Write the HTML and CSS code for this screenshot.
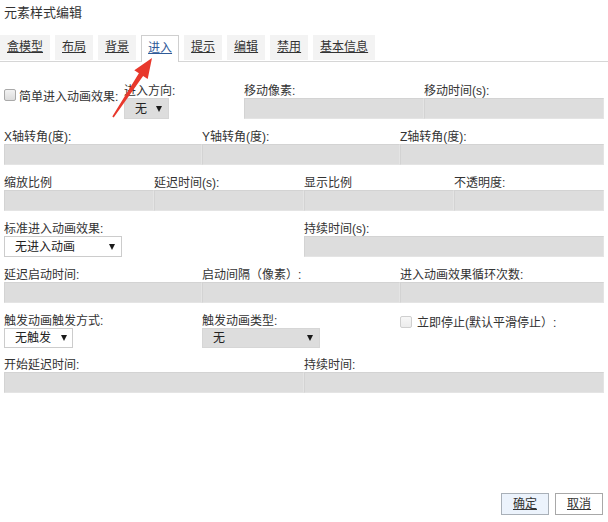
FILE: index.html
```html
<!DOCTYPE html>
<html lang="zh-CN">
<head>
<meta charset="utf-8">
<title>元素样式编辑</title>
<link rel="stylesheet" href="styles.css">
</head>
<body>
<div class="dialog">
  <div class="title">元素样式编辑</div>
  <div class="tabs">
    <a class="tab">盒模型</a>
    <a class="tab">布局</a>
    <a class="tab">背景</a>
    <a class="tab active">进入</a>
    <a class="tab">提示</a>
    <a class="tab">编辑</a>
    <a class="tab">禁用</a>
    <a class="tab">基本信息</a>
  </div>
  <div class="form">
    <div class="row row-a">
      <div class="check-field first"><span class="checkbox"></span><span class="check-label">简单进入动画效果:</span></div>
      <div class="field"><div class="label">进入方向:</div><div class="select gray dir"><span>无</span><span class="caret"></span></div></div>
      <div class="field"><div class="label">移动像素:</div><div class="input"></div></div>
      <div class="field"><div class="label">移动时间(s):</div><div class="input"></div></div>
    </div>
    <div class="row row-three">
      <div class="field"><div class="label">X轴转角(度):</div><div class="input"></div></div>
      <div class="field"><div class="label">Y轴转角(度):</div><div class="input"></div></div>
      <div class="field"><div class="label">Z轴转角(度):</div><div class="input"></div></div>
    </div>
    <div class="row row-four">
      <div class="field"><div class="label">缩放比例</div><div class="input"></div></div>
      <div class="field"><div class="label">延迟时间(s):</div><div class="input"></div></div>
      <div class="field"><div class="label">显示比例</div><div class="input"></div></div>
      <div class="field"><div class="label">不透明度:</div><div class="input"></div></div>
    </div>
    <div class="row row-two">
      <div class="field"><div class="label">标准进入动画效果:</div><div class="select white effect"><span>无进入动画</span><span class="caret"></span></div></div>
      <div class="field"><div class="label">持续时间(s):</div><div class="input"></div></div>
    </div>
    <div class="row row-three">
      <div class="field"><div class="label">延迟启动时间:</div><div class="input"></div></div>
      <div class="field"><div class="label">启动间隔（像素）:</div><div class="input"></div></div>
      <div class="field"><div class="label">进入动画效果循环次数:</div><div class="input"></div></div>
    </div>
    <div class="row row-three trigger">
      <div class="field"><div class="label">触发动画触发方式:</div><div class="select white trig"><span>无触发</span><span class="caret"></span></div></div>
      <div class="field"><div class="label">触发动画类型:</div><div class="select gray ttype"><span>无</span><span class="caret"></span></div></div>
      <div class="check-field stop"><span class="checkbox disabled"></span><span class="check-label">立即停止(默认平滑停止）:</span></div>
    </div>
    <div class="row row-two">
      <div class="field"><div class="label">开始延迟时间:</div><div class="input"></div></div>
      <div class="field"><div class="label">持续时间:</div><div class="input"></div></div>
    </div>
  </div>
  <div class="footer">
    <button class="btn primary">确定</button>
    <button class="btn">取消</button>
  </div>
  <svg class="arrow" width="608" height="522" viewBox="0 0 608 522">
    <polygon points="112.3,116.6 138.9,73.3 134.3,70.3 152,58 147.7,79.1 143.1,76.1 113.7,117.4" fill="#e8382c"/>
  </svg>
</div>
</body>
</html>
```

FILE: styles.css
```css
* { box-sizing: border-box; }
html, body { margin: 0; padding: 0; background: #fff; }
body {
  font-family: "Liberation Sans", "Noto Sans CJK SC", sans-serif;
  font-size: 12px;
  color: #333;
}
.dialog {
  position: relative;
  width: 608px;
  height: 522px;
  display: flex;
  flex-direction: column;
  overflow: hidden;
}
.title {
  font-size: 13px;
  line-height: 16px;
  height: 35px;
  padding: 5px 0 0 4px;
  color: #333;
}
.tabs {
  display: flex;
  gap: 5px;
  height: 27px;
  border-bottom: 1px solid #d6d6d6;
  align-items: flex-start;
}
.tab {
  display: block;
  height: 25px;
  line-height: 25px;
  padding: 0 7px;
  background: #f3f3f3;
  color: #333;
  text-decoration: underline;
  white-space: nowrap;
}
.tab.active {
  height: 27px;
  padding: 0 6px;
  background: #fff;
  border: 1px solid #cfcfcf;
  border-bottom: none;
  color: #2f5b98;
  margin-bottom: -1px;
}
.form {
  padding: 22px 4px 0 4px;
}
.row {
  display: grid;
  margin-bottom: 11px;
}
.row-a { grid-template-columns: 120px 120px 180px 180px; }
.row-three { grid-template-columns: 198px 198px 1fr; }
.row-four { grid-template-columns: repeat(4, 150px); }
.row-two { grid-template-columns: 300px 300px; }
.trigger { margin-top: 2px; margin-bottom: 10px; }
.field {
  display: flex;
  flex-direction: column;
  min-width: 0;
}
.label {
  height: 14px;
  line-height: 14px;
  white-space: nowrap;
  color: #333;
}
.input {
  height: 21px;
  width: 100%;
  background: #dddddd;
  border: 1px solid;
  border-color: #d3d3d3 #e4e4e4 #e4e4e4 #d3d3d3;
}
.select {
  height: 21px;
  display: flex;
  align-items: center;
  justify-content: space-between;
  line-height: 14px;
  white-space: nowrap;
  color: #222;
}
.select.gray {
  background: #dddddd;
  border: 1px solid #d6d6d6;
}
.select.white {
  background: #fff;
  border: 1px solid #cccccc;
}
.select.dir { width: 45px; padding: 0 6px 0 10px; }
.select.effect { width: 118px; padding: 0 6px 0 10px; }
.select.trig { width: 69px; padding: 0 5px 0 10px; height: 20px; }
.select.ttype { width: 118px; padding: 0 6px 0 10px; height: 20px; }
.caret {
  width: 0;
  height: 0;
  border-left: 3px solid transparent;
  border-right: 3px solid transparent;
  border-top: 6px solid #1a1a1a;
}
.check-field {
  display: flex;
  align-items: flex-start;
  white-space: nowrap;
}
.check-field.first { padding-top: 6px; }
.check-field.stop { padding-top: 2px; }
.check-label {
  line-height: 14px;
  color: #333;
}
.first .check-label { margin-left: 3px; }
.stop .check-label { margin-left: 5px; }
.checkbox {
  display: block;
  width: 12px;
  height: 12px;
  margin-top: -1px;
  border: 1px solid #a9a9a9;
  border-radius: 2px;
  background: linear-gradient(#f2f2f2, #dcdcdc);
}
.checkbox.disabled {
  margin-top: 0;
  border-color: #cfcfcf;
  background: linear-gradient(#f7f7f7, #ececec);
}
.footer {
  margin-top: auto;
  display: flex;
  justify-content: flex-end;
  gap: 6px;
  padding: 0 5px 7px 0;
}
.btn {
  height: 22px;
  padding: 0 11px;
  font-family: inherit;
  font-size: 12px;
  line-height: 20px;
  color: #333;
  text-decoration: underline;
  background: #fff;
  border: 1px solid #a8a8a8;
  border-radius: 0;
}
.btn.primary {
  background: #ecf3fc;
  border-color: #a9b0b8;
}
.arrow {
  position: absolute;
  left: 0;
  top: 0;
  pointer-events: none;
}
```
